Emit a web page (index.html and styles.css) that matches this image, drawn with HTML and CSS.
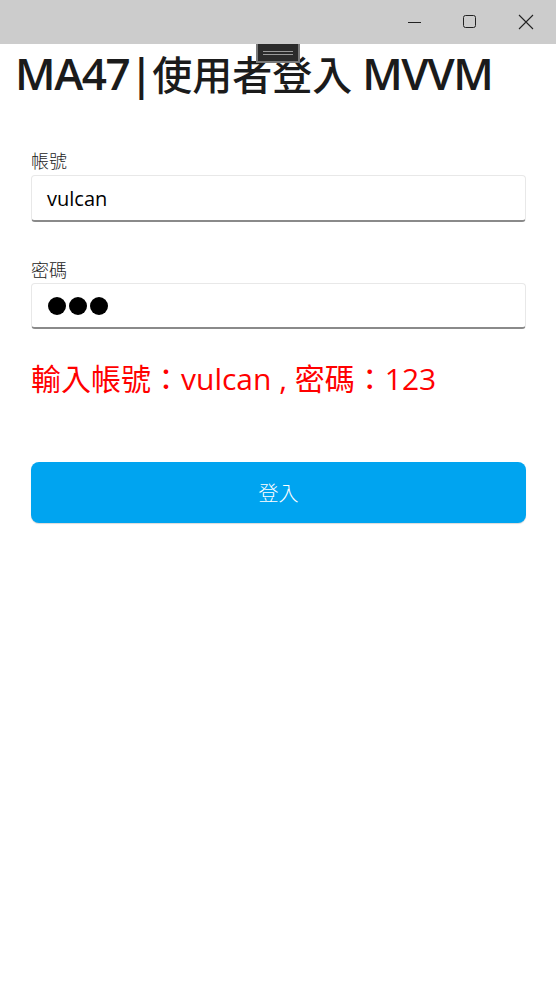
FILE: index.html
```html
<!DOCTYPE html>
<html lang="zh-Hant">
<head>
<meta charset="utf-8">
<link rel="stylesheet" href="styles.css">
</head>
<body>
<div class="titlebar">
  <div class="controls">
    <span class="ctl"><svg width="14" height="14" viewBox="0 0 14 14"><line x1="1" y1="7.5" x2="14" y2="7.5" stroke="#222" stroke-width="1"/></svg></span>
    <span class="ctl"><svg width="14" height="14" viewBox="0 0 14 14"><rect x="0.5" y="0.5" width="12" height="12" rx="2" fill="none" stroke="#222" stroke-width="1"/></svg></span>
    <span class="ctl"><svg width="16" height="16" viewBox="0 0 16 16"><path d="M1 1L15 15M15 1L1 15" stroke="#222" stroke-width="1.1"/></svg></span>
  </div>
</div>
<div class="handle"><span></span><span></span></div>
<main class="page">
  <h1 class="title">MA47|<span class="cjk">使用者登入</span> MVVM</h1>
  <form class="form">
    <label class="field">
      <span class="label">帳號</span>
      <span class="input">vulcan</span>
    </label>
    <label class="field">
      <span class="label">密碼</span>
      <span class="input dots"><i></i><i></i><i></i></span>
    </label>
    <p class="msg">輸入帳號：vulcan , 密碼：123</p>
    <button type="button" class="btn">登入</button>
  </form>
</main>
</body>
</html>
```
FILE: styles.css
```css
* { box-sizing: border-box; }
html, body { margin: 0; padding: 0; background: #fff; }
body {
  font-family: "Open Sans", "Noto Sans CJK TC", sans-serif;
  color: #1b1b1b;
  width: 556px;
  height: 1004px;
  position: relative;
  overflow: hidden;
}
.titlebar {
  height: 44px;
  background: #cccccc;
  display: flex;
  justify-content: flex-end;
}
.controls { display: flex; }
.ctl {
  width: 60px;
  height: 44px;
  display: flex;
  align-items: center;
  justify-content: center;
}
.ctl:nth-child(1) { width: 56px; }
.ctl:nth-child(2) { width: 64px; padding-right: 8px; }
.ctl:nth-child(3) { width: 50px; padding-right: 10px; }
.handle {
  position: absolute;
  left: 256px;
  top: 44px;
  width: 44px;
  height: 19px;
  background: #2b2b2b;
  border: 2px solid #7a7a7a;
  border-top: none;
  display: flex;
  flex-direction: column;
  align-items: center;
  justify-content: center;
  gap: 2px;
}
.handle span {
  width: 30px;
  height: 1px;
  background: #9a9a9a;
}
.page { padding: 0 30px 0 31px; }
.title {
  margin: 0 0 0 -16px;
  font-size: 44px;
  font-weight: 600;
  line-height: 58px;
  letter-spacing: -1.4px;
  color: #1b1b1b;
}
.cjk {
  font-family: "Noto Sans CJK TC", sans-serif;
  font-weight: 500;
  font-size: 40px;
  letter-spacing: 0;
}
.form {
  margin-top: 45px;
  display: flex;
  flex-direction: column;
}
.field { display: flex; flex-direction: column; margin-bottom: 34px; }
.field + .field { margin-bottom: 0; }
.label {
  font-size: 18px;
  line-height: 26px;
  height: 28px;
  padding-bottom: 2px;
  color: #1b1b1b;
  font-family: "Noto Sans CJK TC", sans-serif;
  font-weight: 300;
}
.field + .field .label { height: 27px; }
.input {
  height: 47px;
  border: 1px solid #e8e8e8;
  border-bottom: 2px solid #8a8a8a;
  border-radius: 4px;
  padding: 0 15px;
  font-size: 20px;
  display: flex;
  align-items: center;
  color: #000;
}
.dots { gap: 3px; padding-left: 16px; height: 46px; }
.dots i {
  width: 18px;
  height: 18px;
  border-radius: 50%;
  background: #000;
  display: block;
}
.msg {
  margin: 29px 0 0;
  font-size: 30px;
  line-height: 42px;
  color: #ff0000;
  font-family: "Open Sans", "Noto Sans CJK TC", sans-serif;
}
.btn {
  margin-top: 62px;
  height: 61px;
  border: none;
  border-radius: 8px;
  background: #00a4f0;
  color: #fff;
  font-family: "Noto Sans CJK TC", sans-serif;
  font-weight: 300;
  font-size: 20px;
  box-shadow: 0 1px 1px rgba(0,0,0,0.15);
}
```
